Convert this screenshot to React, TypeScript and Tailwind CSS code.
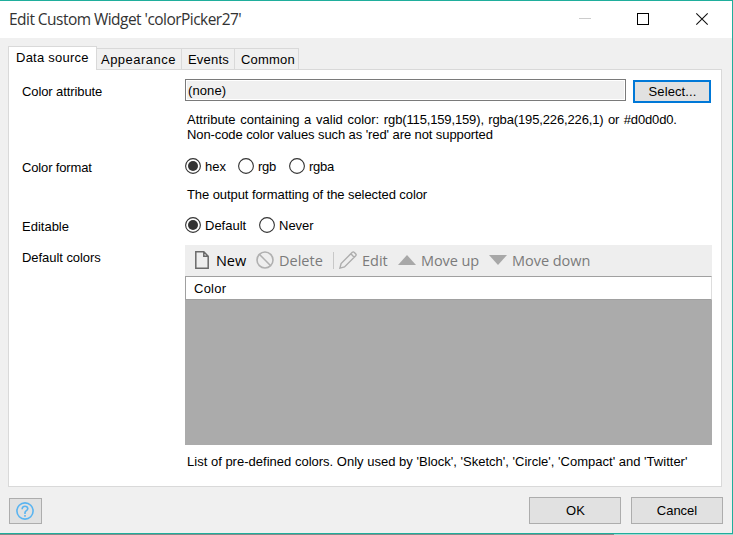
import React from 'react';

const ui = "font-['Liberation_Sans',Arial,sans-serif]";
const segoe = "font-['Open_Sans','Noto_Sans',sans-serif]";

function Radio({ label, checked, className }: { label: string; checked?: boolean; className: string }) {
  return (
    <div className={`flex items-center whitespace-nowrap ${className}`}>
      <svg width="16" height="16" viewBox="0 0 16 16" className="mr-1 shrink-0">
        <circle cx="8" cy="8" r="7.4" fill="#fff" stroke="#333" strokeWidth="1.1" />
        {checked && <circle cx="8" cy="8" r="5" fill="#333" />}
      </svg>
      <span>{label}</span>
    </div>
  );
}

function Label({ children, className }: { children: React.ReactNode; className: string }) {
  return <div className={`w-[163px] shrink-0 whitespace-nowrap ${className}`}>{children}</div>;
}

function TitleBar() {
  return (
    <div className="flex h-[37px] shrink-0 justify-between bg-white">
      <h1 className={`pt-[7px] pl-[9px] text-[15.5px] leading-[22px] tracking-[-0.54px] whitespace-nowrap text-[#333] ${segoe}`}>
        Edit Custom Widget 'colorPicker27'
      </h1>
      <svg width="154" height="37" viewBox="578 1 154 37" fill="none">
        <path d="M579 18.5h12" stroke="#ccc" />
        <rect x="637.5" y="13.5" width="11" height="11" stroke="#000" />
        <path d="M696.3 13.3l11.4 11.4M707.7 13.3l-11.4 11.4" stroke="#111" strokeWidth="1.1" />
      </svg>
    </div>
  );
}

function Tabs() {
  return (
    <div className="relative z-10 -mb-px flex h-6 items-end whitespace-nowrap">
      <div className="h-6 w-[89px] border-x border-t border-[#d9d9d9] bg-white pt-[3px] pl-[7px] tracking-[0.24px]">Data source</div>
      <div className="h-[22px] w-[85px] border-y border-r border-[#d9d9d9] pt-[3px] pl-1 tracking-[0.48px]">Appearance</div>
      <div className="h-[22px] w-[53px] border-y border-r border-[#d9d9d9] pt-[3px] pl-[6px] tracking-[0.2px]">Events</div>
      <div className="h-[22px] w-[64px] border-y border-r border-[#d9d9d9] pt-[3px] pl-[6px] tracking-[0.2px]">Common</div>
    </div>
  );
}

function Toolbar() {
  return (
    <div className={`flex h-[31px] items-center bg-[#eee] pl-[10px] text-[14.5px] leading-5 whitespace-nowrap text-[#7b7b7b] ${segoe}`}>
      <svg width="14" height="18" viewBox="0 0 14 18" fill="none" stroke="#6a6a6a" strokeWidth="1.5" className="relative -top-px shrink-0">
        <path d="M.8.8h8l4.4 4.4v12H.8zM8.800.8v4.400h4.400" />
      </svg>
      <span className="ml-[7px] w-[40px] tracking-[-0.05px] text-black">New</span>
      <svg width="18" height="18" viewBox="0 0 18 18" fill="none" stroke="#b0b0b0" strokeWidth="1.6" className="relative -top-px shrink-0">
        <circle cx="9" cy="9" r="8" />
        <path d="M3.3 3.3l11.4 11.4" />
      </svg>
      <span className="ml-[5px] w-[54px]">Delete</span>
      <span className="h-[17px] w-px bg-[#c8c8c8]" />
      <svg width="18" height="18" viewBox="0 0 18 18" fill="none" stroke="#adadad" strokeWidth="1.4" className="relative -top-px ml-[5px] shrink-0">
        <path d="M.9 17.1l1.200-4.600L13.300 1.300q1-.9 2 .1l1.300 1.300q1 1 .1 2L5.500 15.900zM11.800 2.800l3.400 3.400" />
      </svg>
      <span className="ml-[5px] w-[36px]">Edit</span>
      <svg width="18" height="11" viewBox="0 0 18 11" className="shrink-0"><path d="M0 10L9 0l9 10z" fill="#a8a8a8" /></svg>
      <span className="ml-[5px] w-[68px] tracking-[-0.08px]">Move up</span>
      <svg width="18" height="11" viewBox="0 0 18 11" className="shrink-0"><path d="M0 0h18l-9 10z" fill="#a8a8a8" /></svg>
      <span className="ml-[5px] tracking-[-0.03px]">Move down</span>
    </div>
  );
}

export default function App() {
  return (
    <div className={`h-[535px] w-[733px] overflow-hidden bg-[#888] text-[13px] leading-[15px] text-black ${ui}`}>
      <div className="flex h-[534px] flex-col border-t border-r border-b border-[#1fae9c] bg-[#f0f0f0]">
        <TitleBar />
        <div className="flex flex-col pt-2 pl-2">
          <Tabs />
          <div className="h-[418px] w-[714px] border border-[#d9d9d9] bg-white pl-[13px]">
            <div className="flex h-[26px] pt-[9px]">
              <Label className="pt-[5px] tracking-[-0.1px]">Color attribute</Label>
              <div className="h-[22px] w-[441px] shrink-0 border border-[#7a7a7a] bg-[#f0f0f0] pt-[3px] pl-[2px] tracking-[0.1px] shadow-[inset_0_0_0_1px_white]">(none)</div>
              <button className="mt-px ml-[7px] h-[23px] w-[78px] shrink-0 border-2 border-[#0078d7] bg-[#e1e1e1] pl-px tracking-[0.1px]">Select...</button>
            </div>
            <div className="mt-[16px] ml-[165px] whitespace-nowrap">
              <p className="tracking-[-0.14px] [word-spacing:1px]">
                <span className="tracking-[0.01px]">Attribute containing a valid color: </span>
                rgb(115,159,159), rgba(195,226,226,1) or #d0d0d0.
              </p>
              <p className="tracking-[-0.09px]">Non-code color values such as 'red' are not supported</p>
            </div>
            <div className="mt-4 flex h-4 items-center">
              <Label className="pt-[3px] tracking-[-0.15px]">Color format</Label>
              <Radio label="hex" checked className="w-[53px]" />
              <Radio label="rgb" className="w-[51px] tracking-[-0.3px]" />
              <Radio label="rgba" className="tracking-[-0.3px]" />
            </div>
            <p className="mt-[13px] ml-[165px] tracking-[-0.08px] whitespace-nowrap">The output formatting of the selected color</p>
            <div className="mt-[15px] flex h-4 items-center">
              <Label className="pt-[3px]">Editable</Label>
              <Radio label="Default" checked className="w-[74px]" />
              <Radio label="Never" className="" />
            </div>
            <div className="mt-3 flex">
              <Label className="pt-[5px] tracking-[-0.05px]">Default colors</Label>
              <div className="w-[527px] shrink-0">
                <Toolbar />
                <div className="h-[169px] bg-[#ababab]">
                  <div className="h-6 border border-r-[#ddd] border-[#a0a0a0] bg-white pt-[4px] pl-2 tracking-[0.25px]">Color</div>
                </div>
              </div>
            </div>
            <p className="mt-[9px] ml-[165px] tracking-[0.01px] whitespace-nowrap">List of pre-defined colors. Only used by 'Block', 'Sketch', 'Circle', 'Compact' and 'Twitter'</p>
          </div>
        </div>
        <div className="mt-[10px] flex h-[27px] pl-[9px]">
          <button className="mt-px flex h-[26px] w-[33px] items-center justify-center border border-[#adadad] bg-[#e1e1e1]">
            <svg width="18" height="18" viewBox="0 0 18 18" fill="none" stroke="#5ab4f0" strokeWidth="1.6" className="relative right-px">
              <circle cx="9" cy="9" r="8.1" />
              <path d="M6.200 7.200V6.500Q6.500 4.300 9 4.300T11.800 6.600Q11.800 7.700 10.400 8.600T9 10.500V12M9 13v1.700" />
            </svg>
          </button>
          <button className="ml-[487px] h-[27px] w-[92px] border border-[#adadad] bg-[#e1e1e1] pl-px">OK</button>
          <button className="ml-[10px] h-[27px] w-[92px] border border-[#adadad] bg-[#e1e1e1]">Cancel</button>
        </div>
      </div>
      <div className="ml-[614px] h-px bg-[#a5d8d2]" />
    </div>
  );
}
